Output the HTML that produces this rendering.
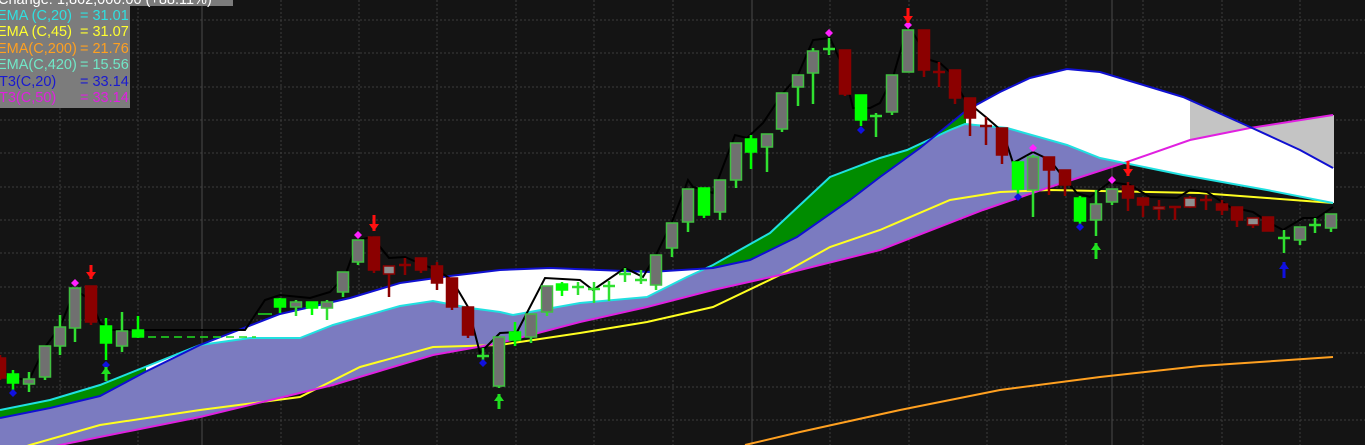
<!DOCTYPE html>
<html><head><meta charset="utf-8"><style>
html,body{margin:0;padding:0;background:#141414;width:1365px;height:445px;overflow:hidden}
svg{display:block}
.lg{font-family:"Liberation Sans",Arial,sans-serif;font-size:14.5px}
</style></head><body>
<svg id="s" width="1365" height="445" viewBox="0 0 1365 445" xmlns="http://www.w3.org/2000/svg">
<rect width="1365" height="445" fill="#141414"/>
<g id="grid"></g>
<g id="bands"></g>
<g id="cand"></g>
<g id="mk"></g>
<rect x="0" y="0" width="233" height="6" fill="#7c7c7c"/>
<rect x="0" y="6" width="130" height="102" fill="#7c7c7c"/>
<text class="lg" x="-2" y="4" fill="#ffffff">Change:     1,862,000.00  (+88.11%)</text>
<g class="lg">
<text x="-3" y="20" fill="#30e0e0">EMA (C,20)</text><text x="80" y="20" fill="#30e0e0">= 31.01</text>
<text x="-3" y="36" fill="#ffff30">EMA (C,45)</text><text x="80" y="36" fill="#ffff30">= 31.07</text>
<text x="-3" y="53" fill="#ffa020">EMA(C,200)</text><text x="80" y="53" fill="#ffa020">= 21.76</text>
<text x="-3" y="69" fill="#70e8c8">EMA(C,420)</text><text x="80" y="69" fill="#70e8c8">= 15.56</text>
<text x="-1" y="86" fill="#1a1ad0">T3(C,20)</text><text x="80" y="86" fill="#1a1ad0">= 33.14</text>
<text x="-1" y="102" fill="#e020e0">T3(C,50)</text><text x="80" y="102" fill="#e020e0">= 33.14</text>
</g>
</svg>
<script>
var NS="http://www.w3.org/2000/svg";
function el(p,t,a){var e=document.createElementNS(NS,t);for(var k in a)e.setAttribute(k,a[k]);document.getElementById(p).appendChild(e);return e;}
[20,53,87,120,153,187,220,253,287,320,353,387,420].forEach(function(y){el("grid","line",{x1:0,x2:1365,y1:y,y2:y,stroke:"#3c3c3c","stroke-dasharray":"2,2"});});
[60,138,281,359,437,516,594,673,830,909,987,1066,1143,1222,1300].forEach(function(x){el("grid","line",{x1:x,x2:x,y1:0,y2:445,stroke:"#3c3c3c","stroke-dasharray":"2,2"});});
[202,752,1112].forEach(function(x){el("grid","line",{x1:x,x2:x,y1:0,y2:445,stroke:"#4a4a4a"});});
var blue=[[0,418],[50,408],[100,396],[145,372],[200,345],[280,314],[350,298],[400,283],[450,276],[500,270],[550,268],[600,270],[650,272],[713,268],[750,260],[797,237],[850,200],[880,177],[920,148],[967,110],[1000,92],[1030,78],[1067,69],[1100,72],[1140,84],[1183,97],[1250,127],[1300,150],[1333,168]];
var cyan=[[0,410],[50,400],[100,385],[150,365],[200,345],[250,338],[300,338],[333,325],[400,306],[433,301],[470,308],[500,312],[513,315],[580,303],[647,297],[687,277],[713,265],[770,233],[830,177],[880,158],[907,150],[950,130],[965,124],[1007,128],[1067,145],[1100,158],[1183,175],[1267,190],[1333,203]];
var mag=[[0,460],[60,445],[200,417],[333,385],[433,355],[500,343],[580,322],[647,307],[713,290],[780,275],[880,250],[983,210],[1050,187],[1127,162],[1190,140],[1250,128],[1333,115]];
var yel=[[0,455],[30,445],[100,425],[200,410],[300,397],[360,367],[433,347],[500,345],[513,343],[580,333],[647,322],[713,307],[780,275],[830,247],[880,230],[950,200],[1000,192],[1050,190],[1100,191],[1200,193],[1267,198],[1333,203]];
var ora=[[745,445],[800,432],[900,410],[1000,390],[1100,377],[1200,366],[1333,357]];
function interp(L,x){for(var i=0;i<L.length-1;i++){if(x>=L[i][0]&&x<=L[i+1][0]){var t=(x-L[i][0])/(L[i+1][0]-L[i][0]);return L[i][1]+t*(L[i+1][1]-L[i][1]);}}return L[L.length-1][1];}
function poly(topL,botL,x0,x1,fill){var pts=[];for(var x=x0;x<=x1;x+=2)pts.push(x+","+interp(topL,x).toFixed(1));for(var x=x1;x>=x0;x-=2)pts.push(x+","+interp(botL,x).toFixed(1));el("bands","polygon",{points:pts.join(" "),fill:fill});}
poly(cyan,mag,0,1128,"#7b7bc0");
poly(cyan,blue,0,146,"#008c00");
poly(blue,cyan,146,700,"#ffffff");
poly(cyan,blue,700,966,"#008c00");
poly(blue,cyan,966,1334,"#ffffff");
poly(mag,blue,1190,1334,"#c4c4c4");
function pl(L,c,w){el("bands","polyline",{points:L.map(function(p){return p.join(",")}).join(" "),fill:"none",stroke:c,"stroke-width":w});}
pl(yel,"#ffff20",2);pl(ora,"#ffa020",2);pl(mag,"#e020e0",2);pl(cyan,"#20e0e0",2);pl(blue,"#1010d0",2);
el("bands","line",{x1:148,x2:256,y1:337,y2:337,stroke:"#20e020","stroke-width":1.5,"stroke-dasharray":"8,5"});
el("bands","line",{x1:258,x2:272,y1:314,y2:314,stroke:"#20e020","stroke-width":1.5});
var blk=[[0,372],[13,378],[29,380],[45,347],[60,327],[75,290],[91,300],[100,323],[110,330],[245,330],[265,300],[280,295],[310,298],[330,292],[345,276],[358,240],[372,237],[389,258],[405,257],[421,264],[437,270],[452,280],[468,307],[480,353],[500,333],[517,332],[545,278],[580,280],[593,290],[625,268],[643,277],[656,255],[672,222],[688,180],[693,187],[713,193],[735,135],[747,138],[763,123],[783,93],[797,77],[813,40],[830,38],[843,67],[853,108],[870,108],[880,103],[893,77],[908,25],[930,60],[940,63],[950,72],[965,100],[987,118],[1003,132],[1013,163],[1033,152],[1050,160],[1063,177],[1077,193],[1090,197],[1110,182],[1130,185],[1150,197],[1177,198],[1190,190],[1207,192],[1230,207],[1253,212],[1270,223],[1283,230],[1303,218],[1317,218],[1333,207]];
el("cand","polyline",{points:blk.map(function(p){return p.join(",")}).join(" "),fill:"none",stroke:"#000","stroke-width":2});
var C=[[0,358,378,355,380,"r"],[13,374,383,370,392,"G"],[29,379,384,372,392,"g"],[45,346,377,346,380,"g"],[60,327,346,315,355,"g"],[75,288,328,288,342,"g"],[91,286,322,286,325,"r"],[106,326,343,318,360,"G"],[122,331,346,312,352,"g"],[138,330,337,316,338,"G"],
[280,299,307,298,313,"G"],[296,302,307,300,316,"g"],[312,302,308,302,315,"G"],[327,302,308,300,320,"g"],[343,272,292,272,297,"g"],[358,240,262,240,265,"g"],[374,237,270,237,273,"r"],[389,266,274,266,297,"r2"],[405,265,266,258,275,"x"],[421,258,270,258,273,"r"],[437,266,283,262,290,"r"],[452,278,307,278,310,"r"],[468,307,335,307,338,"r"],[483,356,357,348,365,"c"],[499,337,386,337,388,"g"],[515,332,340,322,346,"G"],[531,314,337,314,343,"g"],[547,286,312,286,316,"g"],[562,284,290,282,296,"G"],[578,287,288,282,295,"c"],[594,289,290,282,303,"c"],[609,286,287,281,301,"c"],[625,274,275,268,282,"c"],[641,280,281,270,284,"c"],[656,255,285,255,290,"g"],[672,223,248,223,257,"g"],[688,189,222,189,232,"g"],[704,188,215,188,218,"G"],[720,180,212,180,220,"g"],[736,143,180,143,188,"g"],[751,139,152,135,169,"G"],[767,134,147,134,172,"g"],[782,93,129,93,132,"g"],[798,75,87,75,106,"g"],[813,51,73,48,104,"g"],[829,49,50,38,55,"c"],[845,50,94,50,96,"r"],[861,95,120,95,126,"G"],[876,116,117,113,137,"c"],[892,75,112,75,115,"g"],[908,30,72,30,72,"g"],[924,30,70,30,77,"r"],[939,72,73,62,87,"x"],[955,70,98,70,104,"r"],[970,98,118,98,136,"r"],[986,126,127,117,145,"x"],[1002,128,155,128,164,"r"],[1018,162,189,162,194,"G"],[1033,157,190,155,217,"g"],[1049,157,170,157,195,"r"],[1065,170,185,170,196,"r"],[1080,198,221,196,224,"G"],[1096,204,220,190,236,"g"],[1112,189,202,189,205,"g"],[1128,186,198,182,211,"r"],[1143,198,205,198,217,"r"],[1159,207,209,200,220,"r2"],[1175,207,208,207,220,"x"],[1190,198,207,196,208,"r2"],[1206,200,201,195,210,"x"],[1222,204,210,200,215,"r"],[1237,207,220,207,227,"r"],[1253,218,225,218,228,"r2"],[1268,217,231,217,231,"r"],[1284,238,240,230,253,"c"],[1300,227,240,227,245,"g"],[1315,225,226,218,233,"c"],[1331,214,228,214,232,"g"]];
C.forEach(function(c){var x=c[0],t=c[5];
 var wc=(t=="r"||t=="r2"||t=="x")?"#8b0000":"#30e030";
 if(t=="G")wc="#00ff00";
 el("cand","line",{x1:x,x2:x,y1:c[3],y2:c[4],stroke:wc,"stroke-width":2.5});
 if(t=="c"||t=="x"){el("cand","line",{x1:x-6,x2:x+6,y1:c[1],y2:c[1],stroke:wc,"stroke-width":2.5});return;}
 var f,s;
 if(t=="g"){f="#707070";s="#40c040";}else if(t=="G"){f="#00ff00";s="#00ff00";}else if(t=="r"){f="#8b0000";s="#8b0000";}else{f="#909090";s="#8b0000";}
 el("cand","rect",{x:x-5.5,y:c[1],width:11,height:Math.max(2,c[2]-c[1]),fill:f,stroke:s,"stroke-width":1.5});
});
function dia(x,y,c){el("mk","polygon",{points:(x)+","+(y-4)+" "+(x+4)+","+y+" "+x+","+(y+4)+" "+(x-4)+","+y,fill:c});}
[[75,283],[358,235],[829,33],[908,25],[1033,148],[1112,180]].forEach(function(p){dia(p[0],p[1],"#ff20ff");});
[[13,393],[106,365],[483,363],[861,130],[1018,197],[1080,227]].forEach(function(p){dia(p[0],p[1],"#1010e0");});
function arr(x,top,bot,dn,c){var tip=dn?bot:top;var base=dn?tip-7:tip+7;
 el("mk","line",{x1:x,x2:x,y1:top,y2:bot,stroke:c,"stroke-width":3});
 el("mk","polygon",{points:(x-5)+","+base+" "+(x+5)+","+base+" "+x+","+tip,fill:c});}
arr(91,265,279,true,"#ff1010");arr(374,215,231,true,"#ff1010");arr(908,8,23,true,"#ff1010");arr(1128,161,176,true,"#ff1010");
arr(106,367,381,false,"#20e020");arr(499,394,409,false,"#20e020");arr(1096,243,259,false,"#20e020");arr(1284,262,278,false,"#1010e0");
</script>
</body></html>
